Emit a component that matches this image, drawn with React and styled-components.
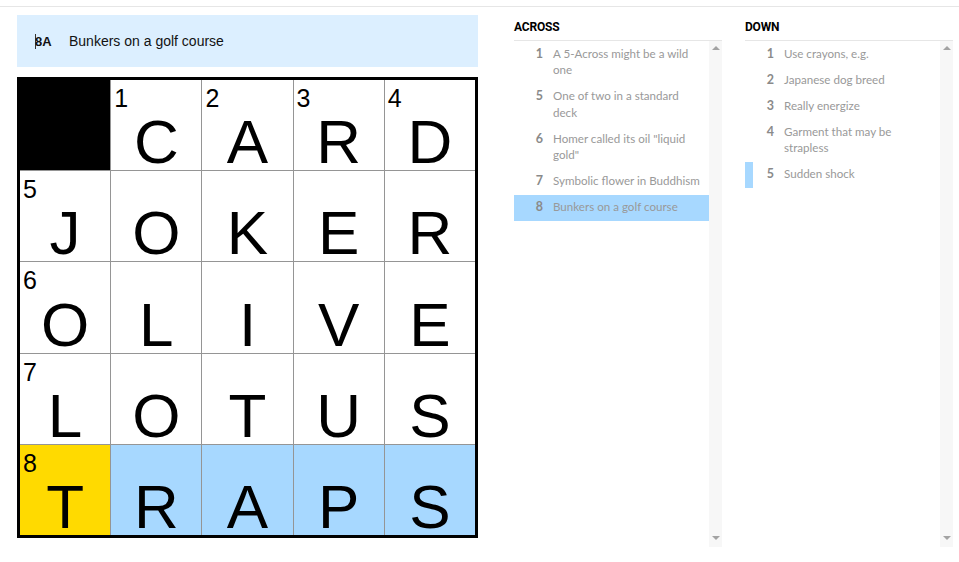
import React from 'react';
import styled, { createGlobalStyle } from 'styled-components';

const GlobalStyle = createGlobalStyle`
  body {
    margin: 0;
    background: #fff;
    font-family: "Liberation Sans", Arial, sans-serif;
  }
`;

const TopRule = styled.div`
  height: 6px;
  border-bottom: 1px solid #e6e6e6;
`;

const Layout = styled.div`
  display: flex;
  padding: 8px 0 0 17px;
`;

const BoardColumn = styled.div`
  width: 461px;
  display: flex;
  flex-direction: column;
  gap: 10px;
`;

const ClueBar = styled.div`
  height: 52px;
  background: #dcefff;
  display: flex;
  align-items: center;
  padding-left: 18px;
  font-size: 14px;
  color: #121212;
`;

const Caret = styled.span`
  display: inline-block;
  width: 1px;
  height: 15px;
  margin-right: -1px;
  background: #333;
`;

const ClueLabel = styled.span`
  width: 34px;
  font-weight: 700;
  font-size: 13px;
`;

const Board = styled.div`
  width: 461px;
  height: 461px;
  box-sizing: border-box;
  border: 3px solid #000;
  display: grid;
  grid-template-columns: repeat(5, 1fr);
  grid-template-rows: repeat(5, 1fr);
  gap: 1px;
  background: #959595;
`;

const fills = {
  block: '#000',
  plain: '#fff',
  word: '#a7d8ff',
  focus: '#ffda00',
};

const Cell = styled.div`
  position: relative;
  background: ${p => fills[p.$state]};
  display: flex;
  justify-content: center;
  align-items: flex-end;
`;

const CellNumber = styled.span`
  position: absolute;
  top: 6px;
  left: 3px;
  font-size: 25px;
  line-height: 25px;
  color: #000;
`;

const Letter = styled.span`
  font-size: 62px;
  line-height: 56px;
  color: #000;
`;

const ClueColumn = styled.section`
  width: 208px;
  margin-left: ${p => p.$offset}px;
  display: flex;
  flex-direction: column;
`;

const ColumnTitle = styled.h3`
  margin: 0;
  height: 26px;
  padding-top: 4px;
  box-sizing: border-box;
  border-bottom: 1px solid #e6e6e6;
  font-family: Roboto, "Liberation Sans", sans-serif;
  font-weight: 700;
  font-size: 12px;
  line-height: 16px;
  letter-spacing: -0.2px;
  color: #000;
  text-transform: uppercase;
`;

const ListFrame = styled.div`
  display: flex;
  height: 506px;
`;

const ClueList = styled.ol`
  flex: 1;
  margin: 0;
  padding: 0;
  list-style: none;
`;

const ClueItem = styled.li`
  display: flex;
  padding: 4.75px 7px 4.75px 0;
  border-left: 8px solid ${p => (p.$related ? '#a7d8ff' : 'transparent')};
  background: ${p => (p.$active ? '#a7d8ff' : 'transparent')};
  font-family: Lato, Roboto, "Liberation Sans", sans-serif;
  font-size: 11.6px;
  line-height: 16.5px;
  color: #999;
`;

const ClueNum = styled.span`
  flex: none;
  width: 21px;
  margin-right: 10px;
  text-align: right;
  font-size: 12.5px;
  font-weight: 700;
  color: #8a8a8a;
`;

const ClueText = styled.span`
  flex: 1;
`;

const ScrollTrack = styled.div`
  width: 13px;
  background: #f7f7f7;
  display: flex;
  flex-direction: column;
  justify-content: space-between;
  align-items: center;
  padding: 5px 0 7px;
  box-sizing: border-box;
`;

const Arrow = styled.span`
  width: 0;
  height: 0;
  border-left: 4px solid transparent;
  border-right: 4px solid transparent;
  ${p =>
    p.$down
      ? 'border-top: 4px solid #a3a3a3;'
      : 'border-bottom: 4px solid #a3a3a3;'}
`;

const grid = [
  [null, ['C', 1], ['A', 2], ['R', 3], ['D', 4]],
  [['J', 5], ['O'], ['K'], ['E'], ['R']],
  [['O', 6], ['L'], ['I'], ['V'], ['E']],
  [['L', 7], ['O'], ['T'], ['U'], ['S']],
  [['T', 8], ['R'], ['A'], ['P'], ['S']],
];

const across = [
  { n: 1, text: 'A 5-Across might be a wild one' },
  { n: 5, text: 'One of two in a standard deck' },
  { n: 6, text: 'Homer called its oil "liquid gold"' },
  { n: 7, text: 'Symbolic flower in Buddhism' },
  { n: 8, text: 'Bunkers on a golf course', active: true },
];

const down = [
  { n: 1, text: 'Use crayons, e.g.' },
  { n: 2, text: 'Japanese dog breed' },
  { n: 3, text: 'Really energize' },
  { n: 4, text: 'Garment that may be strapless' },
  { n: 5, text: 'Sudden shock', related: true },
];

const cellState = (row, col, cell) => {
  if (!cell) return 'block';
  if (row === 4) return col === 0 ? 'focus' : 'word';
  return 'plain';
};

const Clues = ({ title, clues, offset }) => (
  <ClueColumn $offset={offset}>
    <ColumnTitle>{title}</ColumnTitle>
    <ListFrame>
      <ClueList>
        {clues.map(c => (
          <ClueItem key={c.n} $active={c.active} $related={c.related}>
            <ClueNum>{c.n}</ClueNum>
            <ClueText>{c.text}</ClueText>
          </ClueItem>
        ))}
      </ClueList>
      <ScrollTrack>
        <Arrow />
        <Arrow $down />
      </ScrollTrack>
    </ListFrame>
  </ClueColumn>
);

const App = () => (
  <>
    <GlobalStyle />
    <TopRule />
    <Layout>
      <BoardColumn>
        <ClueBar>
          <Caret />
          <ClueLabel>8A</ClueLabel>
          <span>Bunkers on a golf course</span>
        </ClueBar>
        <Board>
          {grid.map((row, r) =>
            row.map((cell, c) => (
              <Cell key={`${r}-${c}`} $state={cellState(r, c, cell)}>
                {cell && cell[1] && <CellNumber>{cell[1]}</CellNumber>}
                {cell && <Letter>{cell[0]}</Letter>}
              </Cell>
            ))
          )}
        </Board>
      </BoardColumn>
      <Clues title="Across" clues={across} offset={36} />
      <Clues title="Down" clues={down} offset={23} />
    </Layout>
  </>
);

export default App;
